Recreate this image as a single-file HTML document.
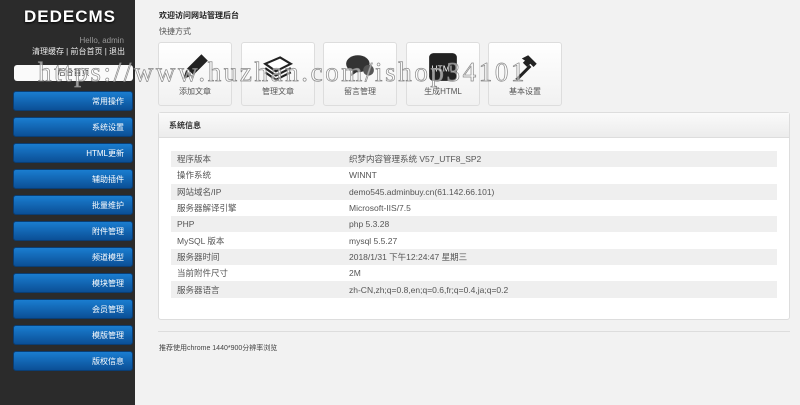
<!DOCTYPE html>
<html><head><meta charset="utf-8"><style>
*{margin:0;padding:0;box-sizing:border-box}
body{width:800px;height:405px;background:#f2f2f2;font-family:"Liberation Sans","Noto Sans CJK SC",sans-serif;font-size:8px;color:#444;position:relative;overflow:hidden}
#side{position:absolute;left:0;top:0;width:135px;height:405px;background:#2b2b2b}
.logo{position:absolute;left:24px;top:7px;color:#fff;font-weight:bold;font-size:17px;letter-spacing:1px;text-shadow:0 1px 2px #000}
.hello{position:absolute;right:11px;top:36px;color:#999;font-size:8px}
.links{position:absolute;right:10px;top:46px;color:#eee;font-size:8px}
.home{position:absolute;left:14px;top:65px;width:119px;height:16px;background:#fafafa;border-radius:3px;color:#333;text-align:center;line-height:16px;font-size:8px}
.btn{position:absolute;left:13px;width:120px;height:20px;border-radius:3px;background:linear-gradient(#1a7dd0,#0b4f96);color:#fff;font-size:8px;text-align:right;padding-right:8px;line-height:20px;border:1px solid #0a3e74}
h1{position:absolute;left:159px;top:10px;font-size:8px;font-weight:bold;color:#222}
.kj{position:absolute;left:159px;top:26px;font-size:8px;color:#555}
.q{position:absolute;top:42px;width:74px;height:64px;background:linear-gradient(#fff,#f1f1f1);border:1px solid #ddd;border-radius:3px;text-align:center;font-size:8px;color:#555}
.q svg{display:block;margin:8px auto 3px}
.panel{position:absolute;left:158px;top:112px;width:632px;height:208px;background:#fff;border:1px solid #ddd;border-radius:3px}
.ph{height:25px;background:linear-gradient(#fafafa,#ececec);border-bottom:1px solid #ddd;line-height:25px;padding-left:10px;font-weight:bold;font-size:8px;color:#333}
table{position:absolute;left:12px;top:38px;width:606px;border-collapse:collapse}
td{height:16.3px;font-size:8.5px;color:#555;padding-left:6px}
tr:nth-child(odd) td{background:#efefef}
td:first-child{width:172px}
.hr{position:absolute;left:158px;top:331px;width:632px;border-top:1px solid #ddd}
.foot{position:absolute;left:159px;top:343px;font-size:7px;color:#444}
.wm{position:absolute;left:38px;top:57px;font-family:"Liberation Serif",serif;font-size:27px;color:rgba(255,255,255,.55);-webkit-text-stroke:0.7px #888;letter-spacing:2.6px;white-space:nowrap}
</style></head><body>
<div id="side">
<div class="logo">DEDECMS</div>
<div class="hello">Hello, admin</div>
<div class="links">清理缓存 | 前台首页 | 退出</div>
<div class="home">后台首页</div>
<div class="btn" style="top:91px">常用操作</div>
<div class="btn" style="top:117px">系统设置</div>
<div class="btn" style="top:143px">HTML更新</div>
<div class="btn" style="top:169px">辅助插件</div>
<div class="btn" style="top:195px">批量维护</div>
<div class="btn" style="top:221px">附件管理</div>
<div class="btn" style="top:247px">频道模型</div>
<div class="btn" style="top:273px">模块管理</div>
<div class="btn" style="top:299px">会员管理</div>
<div class="btn" style="top:325px">模版管理</div>
<div class="btn" style="top:351px">版权信息</div>
</div>
<h1>欢迎访问网站管理后台</h1>
<div class="kj">快捷方式</div>
<div class="q" style="left:158px"><svg width="32" height="32" viewBox="0 0 30 30"><path d="M4 26l3-9 14-14 6 6-14 14z" fill="#222"/><path d="M7 17l6 6" stroke="#fff" stroke-width="1.5"/></svg>添加文章</div>
<div class="q" style="left:241px"><svg width="32" height="32" viewBox="0 0 30 30"><path d="M3 12l14-6 10 6-14 7z" fill="#fff" stroke="#222" stroke-width="2"/><path d="M3 16l10 7 14-7M3 20l10 7 14-7" fill="none" stroke="#222" stroke-width="2"/></svg>管理文章</div>
<div class="q" style="left:323px"><svg width="32" height="32" viewBox="0 0 30 30"><ellipse cx="13" cy="12" rx="11" ry="8" fill="#333"/><path d="M8 18l-2 6 7-5z" fill="#333"/><circle cx="23" cy="18" r="5" fill="#555"/></svg>留言管理</div>
<div class="q" style="left:406px"><svg width="32" height="32" viewBox="0 0 30 30"><rect x="2" y="2" width="26" height="26" rx="4" fill="#222"/><text x="15" y="19" font-size="8" fill="#fff" text-anchor="middle" font-family="Liberation Sans">HTML</text></svg>生成HTML</div>
<div class="q" style="left:488px"><svg width="32" height="32" viewBox="0 0 30 30"><path d="M6 26l13-13 2 2-13 13z" fill="#222"/><path d="M12 7l6-3 8 8-3 3-3-3-3 3-4-4 2-2z" fill="#222"/></svg>基本设置</div>
<div class="panel"><div class="ph">系统信息</div>
<table>
<tr><td>程序版本</td><td>织梦内容管理系统 V57_UTF8_SP2</td></tr>
<tr><td>操作系统</td><td>WINNT</td></tr>
<tr><td>网站域名/IP</td><td>demo545.adminbuy.cn(61.142.66.101)</td></tr>
<tr><td>服务器解译引擎</td><td>Microsoft-IIS/7.5</td></tr>
<tr><td>PHP</td><td>php 5.3.28</td></tr>
<tr><td>MySQL 版本</td><td>mysql 5.5.27</td></tr>
<tr><td>服务器时间</td><td>2018/1/31 下午12:24:47 星期三</td></tr>
<tr><td>当前附件尺寸</td><td>2M</td></tr>
<tr><td>服务器语言</td><td>zh-CN,zh;q=0.8,en;q=0.6,fr;q=0.4,ja;q=0.2</td></tr>
</table></div>
<div class="hr"></div>
<div class="foot">推荐使用chrome 1440*900分辨率浏览</div>
<div class="wm">https://www.huzhan.com/ishop34101</div>
</body></html>
